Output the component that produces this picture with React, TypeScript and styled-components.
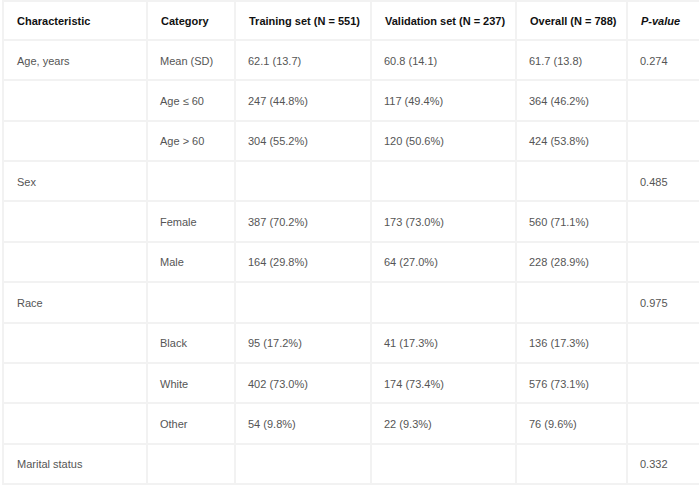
import React from "react";
import styled, { createGlobalStyle } from "styled-components";

const Global = createGlobalStyle`
  html, body { margin: 0; padding: 0; background: #fff; overflow: hidden; }
  body { font-family: "Liberation Sans", Arial, sans-serif; }
`;

const Wrap = styled.div`
  padding: 0 0 0 2px;
  overflow: hidden;
`;

const Table = styled.table`
  border-collapse: collapse;
  table-layout: fixed;
  width: 744px;
  font-size: 11px;
`;

const Th = styled.th<{ $italic?: boolean }>`
  text-align: left;
  font-weight: bold;
  font-style: ${(p) => (p.$italic ? "italic" : "normal")};
  color: #111;
  padding: 0 12px 0 13px;
  height: 37px;
  line-height: 14px;
  border: 2px solid #f2f2f2;
  border-bottom: 1px solid #8fc3ea;
  white-space: nowrap;
`;

const Td = styled.td`
  text-align: left;
  color: #555;
  padding: 1px 12px 0 12px;
  height: 37.36px;
  line-height: 14px;
  border: 2px solid #f2f2f2;
  white-space: nowrap;

  &:first-child {
    padding-left: 13px;
  }
`;

type Row = [string, string, string, string, string, string];

const rows: Row[] = [
  ["Age, years", "Mean (SD)", "62.1 (13.7)", "60.8 (14.1)", "61.7 (13.8)", "0.274"],
  ["", "Age ≤ 60", "247 (44.8%)", "117 (49.4%)", "364 (46.2%)", ""],
  ["", "Age > 60", "304 (55.2%)", "120 (50.6%)", "424 (53.8%)", ""],
  ["Sex", "", "", "", "", "0.485"],
  ["", "Female", "387 (70.2%)", "173 (73.0%)", "560 (71.1%)", ""],
  ["", "Male", "164 (29.8%)", "64 (27.0%)", "228 (28.9%)", ""],
  ["Race", "", "", "", "", "0.975"],
  ["", "Black", "95 (17.2%)", "41 (17.3%)", "136 (17.3%)", ""],
  ["", "White", "402 (73.0%)", "174 (73.4%)", "576 (73.1%)", ""],
  ["", "Other", "54 (9.8%)", "22 (9.3%)", "76 (9.6%)", ""],
  ["Marital status", "", "", "", "", "0.332"],
];

const widths = [144, 88, 136, 145, 111, 120];

export default function App() {
  return (
    <Wrap>
      <Global />
      <Table>
        <colgroup>
          {widths.map((w, i) => (
            <col key={i} style={{ width: w }} />
          ))}
        </colgroup>
        <thead>
          <tr>
            <Th>Characteristic</Th>
            <Th>Category</Th>
            <Th>Training set (N = 551)</Th>
            <Th>Validation set (N = 237)</Th>
            <Th>Overall (N = 788)</Th>
            <Th $italic>P-value</Th>
          </tr>
        </thead>
        <tbody>
          {rows.map((r, i) => (
            <tr key={i}>
              {r.map((c, j) => (
                <Td key={j}>{c}</Td>
              ))}
            </tr>
          ))}
        </tbody>
      </Table>
    </Wrap>
  );
}
